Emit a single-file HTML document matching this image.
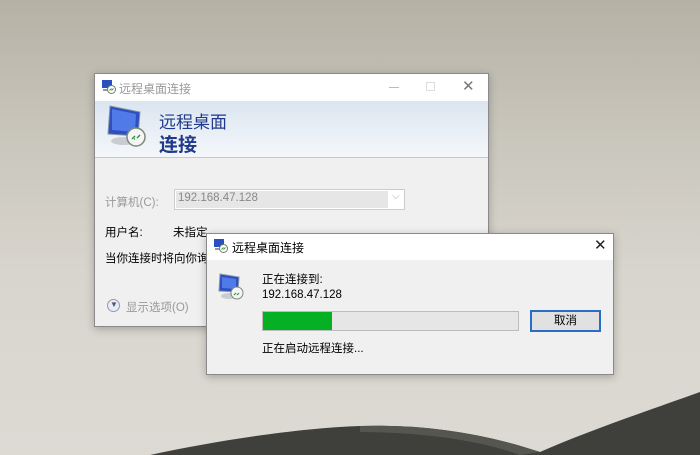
<!DOCTYPE html>
<html><head><meta charset="utf-8"><style>
*{margin:0;padding:0;box-sizing:border-box}
body{width:700px;height:455px;overflow:hidden;position:relative;font-family:"Liberation Sans","Noto Sans CJK SC",sans-serif;font-size:11.5px;color:#000;
background:linear-gradient(180deg,#b5b1a5 0%,#c9c6bc 30%,#d8d5ce 60%,#dddad4 100%)}
.abs{position:absolute}
.win{background:#f0f0f0;border:1px solid #8a8a8a;box-shadow:0 2px 8px rgba(0,0,0,.25)}
.tb{background:#fff;height:26px;position:absolute;left:0;right:0;top:0}
</style></head><body>
<svg class="abs" style="left:0;top:0" width="700" height="455">
<path d="M150 455 C220 440 300 428 360 426 C420 424 480 432 540 452 C590 430 650 410 700 392 L700 455 Z" fill="#3f403c"/>
<path d="M360 426 C420 424 480 432 540 452 L520 455 C480 440 420 432 360 432Z" fill="#55564f"/>
</svg>

<div class="abs win" style="left:94px;top:73px;width:395px;height:254px">
  <div class="tb" style="height:27px">
    <svg class="abs" style="left:7px;top:6px" width="14" height="14"><rect x="0" y="0" width="10" height="8" fill="#2a50c0"/><rect x="1" y="9" width="6" height="2" fill="#999"/><circle cx="9.5" cy="9.5" r="4" fill="#fff" stroke="#777"/><path d="M7.5 10.5l2-2M9.5 10.5l2-2" stroke="#2a2" stroke-width="1"/></svg>
    <div class="abs" style="left:24px;top:6px;color:#999;font-size:12px">远程桌面连接</div>
    <div class="abs" style="left:294px;top:13px;width:10px;height:1px;background:#bbb"></div>
    <div class="abs" style="left:331px;top:8px;width:9px;height:9px;border:1px solid #ddd"></div>
    <div class="abs" style="left:367px;top:3px;color:#777;font-size:15px">✕</div>
  </div>
  <div class="abs" style="left:0;right:0;top:27px;height:57px;background:linear-gradient(180deg,#dbe5f0,#f4f7fa);border-bottom:1px solid #c8c8c8"></div>
  <svg class="abs" style="left:11px;top:30px" width="45" height="46">
    <path d="M4 2 L34 8 L32 32 L2 30Z" fill="#2d4fbf" stroke="#8896a8"/>
    <path d="M6 5 L30 10 L29 28 L6 26Z" fill="#4f7ae8"/>
    <ellipse cx="18" cy="37" rx="13" ry="4" fill="#c9ccd0"/>
    <circle cx="30" cy="33" r="9" fill="#f5f5f5" stroke="#7a8a7a" stroke-width="1.5"/>
    <path d="M26 35l3-3M29 35l-1 0M31 34l3-3" stroke="#2a9a3a" stroke-width="1.5"/>
  </svg>
  <div class="abs" style="left:64px;top:34px;font-size:17px;color:#1f3a8a">远程桌面</div>
  <div class="abs" style="left:64px;top:56px;font-size:19px;color:#1f3a8a;font-weight:bold">连接</div>
  <div class="abs" style="left:10px;top:120px;color:#999">计算机(C):</div>
  <div class="abs" style="left:79px;top:115px;width:231px;height:21px;border:1px solid #ccc;background:#fff">
    <div class="abs" style="left:1px;top:1px;width:212px;height:17px;background:#e6e6e6"></div>
    <div class="abs" style="left:3px;top:2px;color:#888">192.168.47.128</div>
    <div class="abs" style="left:217px;top:1px;color:#aaa;font-size:10px">⌵</div>
  </div>
  <div class="abs" style="left:10px;top:150px">用户名:</div>
  <div class="abs" style="left:78px;top:150px">未指定</div>
  <div class="abs" style="left:10px;top:176px">当你连接时将向你询问凭</div>
  <div class="abs" style="left:12px;top:225px;width:13px;height:13px;border-radius:50%;border:1px solid #99a;background:#e8ecf4"></div>
  <div class="abs" style="left:15px;top:226px;color:#557;font-size:8px">▼</div>
  <div class="abs" style="left:31px;top:225px;color:#999">显示选项(O)</div>
</div>

<div class="abs win" style="left:206px;top:233px;width:408px;height:142px">
  <div class="tb">
    <svg class="abs" style="left:7px;top:5px" width="14" height="14"><rect x="0" y="0" width="10" height="8" fill="#2a50c0"/><rect x="1" y="9" width="6" height="2" fill="#999"/><circle cx="9.5" cy="9.5" r="4" fill="#fff" stroke="#777"/><path d="M7.5 10.5l2-2M9.5 10.5l2-2" stroke="#2a2" stroke-width="1"/></svg>
    <div class="abs" style="left:25px;top:5px;font-size:12px">远程桌面连接</div>
    <div class="abs" style="left:387px;top:2px;font-size:15px;color:#222">✕</div>
  </div>
  <svg class="abs" style="left:11px;top:39px" width="28" height="28">
    <path d="M2 1 L21 4 L20 19 L1 18Z" fill="#2d4fbf" stroke="#8896a8"/>
    <path d="M4 4 L18 6 L18 16 L4 15Z" fill="#4f7ae8"/>
    <ellipse cx="11" cy="23" rx="8" ry="3" fill="#c9ccd0"/>
    <circle cx="19" cy="20" r="6" fill="#f5f5f5" stroke="#7a8a7a"/>
    <path d="M16 22l2-2M19 22l2-2" stroke="#2a9a3a" stroke-width="1.2"/>
  </svg>
  <div class="abs" style="left:55px;top:37px">正在连接到:</div>
  <div class="abs" style="left:55px;top:55px">192.168.47.128</div>
  <div class="abs" style="left:55px;top:77px;width:257px;height:20px;background:#e6e6e6;border:1px solid #bcbcbc">
    <div style="width:69px;height:18px;background:#06b025"></div>
  </div>
  <div class="abs" style="left:323px;top:76px;width:71px;height:22px;border:2px solid #2b6cc4;background:#e1e1e1;text-align:center;line-height:18px">取消</div>
  <div class="abs" style="left:55px;top:106px">正在启动远程连接...</div>
</div>
</body></html>
